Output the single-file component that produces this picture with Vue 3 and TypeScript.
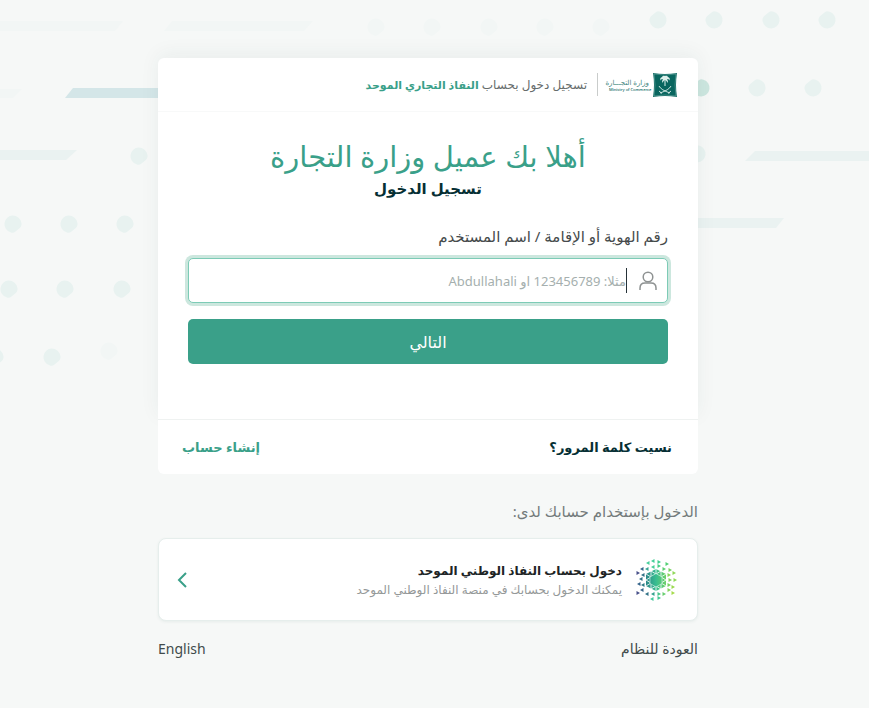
<script setup lang="ts">
import { ref } from 'vue'

interface Drop {
  x: number
  y: number
  tone: 'soft' | 'faint' | 'strong'
  flip: boolean
}

const username = ref('')

const row = (xs: number[], y: number, tone: Drop['tone'], flip: boolean): Drop[] =>
  xs.map((x) => ({ x, y, tone, flip }))

const drops: Drop[] = [
  ...row([376, 432, 489, 545, 601], 27, 'faint', false),
  ...row([139], 156, 'soft', false),
  ...row([13, 69, 125], 224, 'soft', false),
  ...row([9, 65, 122], 289, 'soft', false),
  ...row([-5, 52], 357, 'soft', false),
  ...row([109], 351, 'faint', false),
  ...row([658, 714, 771, 827], 20, 'soft', true),
  ...row([701], 88, 'strong', true),
  ...row([757, 813], 88, 'soft', true),
  ...row([697], 154, 'soft', true),
]

const dropTransform = (d: Drop): string => `translate(${d.x} ${d.y})${d.flip ? ' rotate(180)' : ''}`

// Triangular sparks of the national access emblem: x, y, rotation, colour
const sparks: [number, number, number, string][] = [
  [13, 4, 180, '#45cf9a'], [18, 2, 180, '#43cf98'], [24, 3, 0, '#3fcf8f'], [32, 5, 0, '#52cf74'],
  [7, 10, 180, '#35648a'], [12, 10, 180, '#36a592'], [18, 8, 180, '#43cf98'], [24, 7, 0, '#45cf85'],
  [29, 10, 0, '#5ccf72'], [35, 11, 0, '#76d260'], [3, 14, 0, '#49518a'], [8, 16, 180, '#2f7185'],
  [34, 16, 0, '#8bd65a'], [39, 14, 0, '#90d858'], [6, 20, 180, '#2f7185'],
  [35, 21, 0, '#83d55c'], [40, 21, 0, '#8fd954'], [4, 25, 180, '#35648a'],
  [8, 26, 180, '#2b7a85'], [34, 26, 0, '#76d260'], [38, 28, 0, '#9ad94e'], [3, 34, 0, '#49518a'],
  [7, 31, 180, '#35648a'], [34, 31, 0, '#83d55c'], [38, 34, 0, '#a6db4c'], [12, 35, 180, '#2f7185'],
  [18, 35, 180, '#32a28d'], [24, 35, 0, '#45c78a'], [29, 35, 0, '#69ce70'], [17, 40, 180, '#43c99c'],
  [24, 39, 0, '#45c995'],
]
</script>

<template>
  <div class="page" dir="rtl" lang="ar">
    <svg class="pattern" width="869" height="400" viewBox="0 0 869 400" aria-hidden="true">
      <g class="bar-faint">
        <path d="M0 21H123L115 31H0Z" />
        <path d="M172 21H313L304 31H164Z" />
        <path d="M0 89H22L13 98H0Z" />
      </g>
      <path class="bar-strong" d="M73 88H190V98H65Z" />
      <path class="bar-soft" d="M0 150H77L66 160H0Z" />
      <path class="bar-soft" d="M755 151H869V161H745Z" />
      <path class="bar-soft" d="M690 218H784L776 228H690Z" />
      <path
        v-for="(d, i) in drops"
        :key="i"
        :class="'drop-' + d.tone"
        :transform="dropTransform(d)"
        d="M8.300 1.500Q8 3 6.500 4.200L2.500 7.500Q0 9.500-2.500 8.200A8.500 8.500 0 1 1 8.300-1.500Q8.800 0 8.300 1.500Z"
      />
    </svg>

    <main class="column">
      <section class="card">
        <div class="card-main">
          <header class="card-head">
            <svg class="ministry" width="70" height="26" viewBox="0 0 70 26" role="img" aria-label="وزارة التجارة">
              <path fill="#09665f" d="M45 1Q57 3 69 1Q67 13 69 25Q57 23 45 25Q47 13 45 1Z" />
              <path fill="none" stroke="#9bc5c1" stroke-width=".4" d="M46 2Q57 4 68 2Q66 13 68 24Q57 22 46 24Q48 13 46 2Z" />
              <path fill="#dcefeb" d="M56.500 14V8L54 11Q54 8 55 7Q52 7 53 9Q51 6 54 5Q55 3 57 4Q59 3 60 5Q63 6 61 9Q62 7 59 7Q60 8 60 11L57.500 8V14Z" />
              <path fill="none" stroke="#dcefeb" stroke-width=".9" d="M51 14Q53 18 62 21M63 14Q61 18 52 21M51 19L54 21.500M63 19L60 21.500" />
              <text class="logo-ar" x="41" y="13" direction="rtl">وزارة التجـــارة</text>
              <text class="logo-en" x="1" y="19" direction="ltr">Ministry of Commerce</text>
            </svg>
            <p class="head-text">تسجيل دخول بحساب <strong>النفاذ التجاري الموحد</strong></p>
          </header>

          <form class="card-body" @submit.prevent>
            <h1 class="welcome">أهلا بك عميل وزارة التجارة</h1>
            <h2 class="subtitle">تسجيل الدخول</h2>
            <label class="label" for="username">رقم الهوية أو الإقامة / اسم المستخدم</label>
            <div class="field">
              <svg class="user" width="20" height="20" viewBox="0 0 20 20" aria-hidden="true">
                <circle cx="10" cy="6" r="4.800" />
                <path d="M2 19V17Q2 12 7 12H13Q18 12 18 17V19" />
              </svg>
              <span class="caret"></span>
              <input id="username" v-model="username" type="text" placeholder="مثلا: 123456789 او Abdullahali" />
            </div>
            <button class="next" type="submit">التالي</button>
          </form>
        </div>

        <footer class="card-foot">
          <a class="forgot" href="#">نسيت كلمة المرور؟</a>
          <a class="signup" href="#">إنشاء حساب</a>
        </footer>
      </section>

      <p class="via">الدخول بإستخدام حسابك لدى:</p>

      <a class="provider" href="#">
        <svg class="emblem" width="42" height="42" viewBox="0 0 42 42" aria-hidden="true">
          <defs>
            <linearGradient id="core" gradientUnits="userSpaceOnUse" x1="10" y1="0" x2="32" y2="0">
              <stop offset="0" stop-color="#2b8389" />
              <stop offset=".5" stop-color="#38bd90" />
              <stop offset="1" stop-color="#74d364" />
            </linearGradient>
          </defs>
          <path fill="url(#core)" d="M21 10L31 15V27L21 32L11 27V15Z" />
          <path
            class="lattice"
            d="M11 15L31 27M31 15L11 27M21 10V32M16 12V30M26 12V30M11 21L26 12M11 21L26 30M31 21L16 12M31 21L16 30"
          />
          <path class="core" fill="url(#core)" d="M21 14.500L27 18V24.500L21 28L15 24.500V18Z" />
          <path
            v-for="(s, i) in sparks"
            :key="i"
            :fill="s[3]"
            :transform="`translate(${s[0]} ${s[1]}) rotate(${s[2]})`"
            d="M-1.500-2L2 0L-1.500 2Z"
          />
        </svg>
        <span class="provider-text">
          <span class="provider-title">دخول بحساب النفاذ الوطني الموحد</span>
          <span class="provider-note">يمكنك الدخول بحسابك في منصة النفاذ الوطني الموحد</span>
        </span>
        <svg class="chevron" width="10" height="16" viewBox="0 0 10 16" aria-hidden="true">
          <path d="M9 1L2 8L9 15" />
        </svg>
      </a>

      <nav class="links">
        <a href="#">العودة للنظام</a>
        <a href="#" lang="en">English</a>
      </nav>
    </main>
  </div>
</template>

<style>
body {
  background: #f6f8f7;
}
</style>

<style scoped>
.page {
  position: relative;
  min-height: 100vh;
  box-sizing: border-box;
  padding: 58px 13px 32px 0;
  overflow: hidden;
  background: #f6f8f7;
  font-family: "Noto Sans", "DejaVu Sans", sans-serif;
  color: #414b4b;
}

.page a {
  color: inherit;
  text-decoration: none;
}

.pattern {
  position: absolute;
  top: 0;
  left: 0;
}

.bar-faint,
.drop-faint {
  fill: #f2f6f5;
}

.bar-soft {
  fill: #eaf2f1;
}

.bar-strong {
  fill: #d4e6e8;
}

.drop-soft {
  fill: #e8f2f0;
}

.drop-strong {
  fill: #cce6df;
}

.column {
  position: relative;
  max-width: 540px;
  margin: 0 auto;
}

.card-main {
  border-radius: 6px 6px 0 0;
  background: #fff;
  box-shadow: 0 -4px 20px rgba(40, 70, 60, 0.06);
}

.card-head {
  display: flex;
  align-items: center;
  height: 53px;
  padding: 0 20px;
  border-bottom: 1px solid #f8f9f9;
}

.ministry {
  flex: none;
  overflow: visible;
}

.logo-ar {
  font-size: 7px;
  fill: #3f8580;
}

.logo-en {
  font-size: 4px;
  font-weight: 500;
  fill: #09665f;
}

.head-text {
  margin: 0 10px 0 0;
  padding-right: 10px;
  border-right: 1px solid #c9cccb;
  font-size: 12px;
  line-height: 23px;
  color: #666c6c;
}

.head-text strong {
  font-size: 11px;
  color: #3aa089;
}

.card-body {
  display: flex;
  flex-direction: column;
  padding: 26px 30px 55px;
}

.welcome {
  margin: 0;
  font-size: 29px;
  font-weight: 400;
  line-height: 36px;
  text-align: center;
  color: #3aa089;
}

.subtitle {
  margin: 0;
  font-size: 15px;
  font-weight: 700;
  line-height: 28px;
  text-align: center;
  color: #062f34;
}

.label {
  margin: 20px 0 8px;
  font-size: 15px;
  line-height: 28px;
  color: #454a4b;
}

.field {
  display: flex;
  align-items: center;
  height: 43px;
  padding: 0 9px;
  border: 1px solid #7dcbb6;
  border-radius: 5px;
  background: #fff;
  box-shadow: 0 0 0 3px #cce7de;
}

.user {
  flex: none;
  fill: none;
  stroke: #8e9292;
  stroke-width: 1.5;
}

.caret {
  flex: none;
  width: 1px;
  height: 25px;
  margin-right: 11px;
  background: #263238;
}

.field input {
  flex: 1;
  min-width: 0;
  padding: 0;
  border: 0;
  outline: 0;
  background: transparent;
  font-family: inherit;
  font-size: 13px;
  color: #263238;
}

.field input::placeholder {
  color: #a5afae;
}

.next {
  height: 45px;
  margin-top: 16px;
  border: 0;
  border-radius: 5px;
  background: #3aa089;
  font-family: inherit;
  font-size: 16px;
  color: #fff;
}

.card-foot {
  position: relative;
  display: flex;
  align-items: center;
  justify-content: space-between;
  height: 54px;
  padding: 0 26px 0 24px;
  border-top: 1px solid #eff2f1;
  border-radius: 0 0 6px 6px;
  background: #fff;
  font-size: 13px;
  font-weight: 700;
}

.card-foot .forgot {
  color: #062f34;
}

.card-foot .signup {
  color: #3aa089;
}

.via {
  margin: 24px 0 14px;
  font-size: 15px;
  line-height: 26px;
  color: #737b7b;
}

.provider {
  display: flex;
  align-items: center;
  height: 81px;
  padding: 0 20px 0 18px;
  border: 1px solid #e6eeec;
  border-radius: 8px;
  background: #fff;
  box-shadow: 0 1px 3px rgba(50, 100, 90, 0.08);
}

.emblem {
  flex: none;
}

.lattice {
  fill: none;
  stroke: #fff;
  stroke-width: 0.8;
}

.core {
  stroke: #d5f3e6;
  stroke-width: 0.6;
}

.provider-text {
  display: flex;
  flex: 1;
  flex-direction: column;
  margin-right: 13px;
}

.provider-title {
  font-size: 12px;
  font-weight: 700;
  line-height: 20px;
  color: #202425;
}

.provider-note {
  font-size: 12px;
  line-height: 18px;
  color: #949898;
}

.chevron {
  flex: none;
  fill: none;
  stroke: #3aa089;
  stroke-width: 2;
}

.links {
  display: flex;
  justify-content: space-between;
  margin-top: 15px;
  font-size: 14px;
  line-height: 26px;
}
</style>
